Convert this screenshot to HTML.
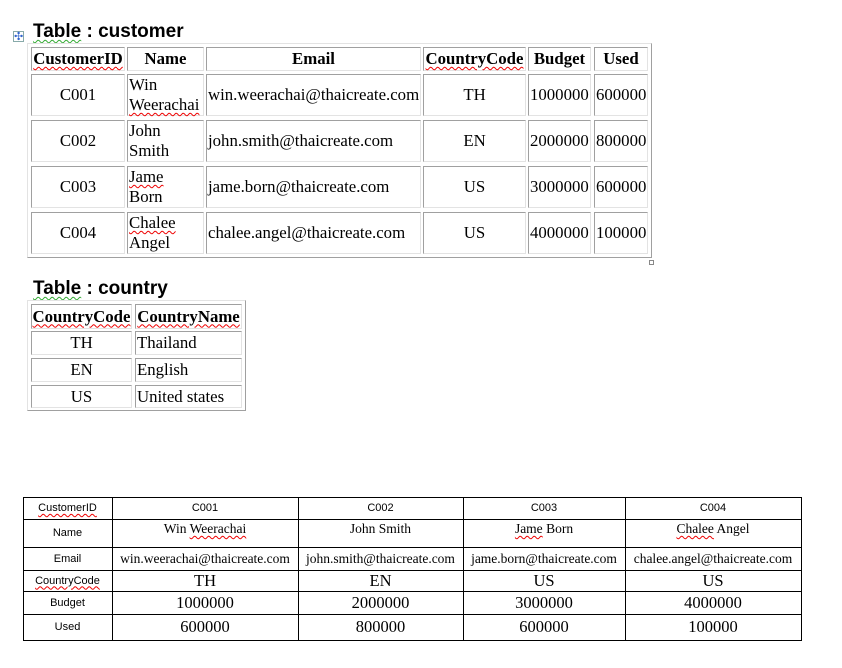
<!DOCTYPE html>
<html><head><meta charset="utf-8"><style>
body{margin:0;width:842px;height:668px;background:#fff;position:relative;overflow:hidden;font-family:"Liberation Serif",serif;color:#000}
.c{position:absolute;box-sizing:border-box;border:1px solid;border-color:#a0a0a0 #e3e3e3 #e3e3e3 #a0a0a0;font-size:16.8px;display:flex;align-items:center;justify-content:center;text-align:center;line-height:20px;white-space:nowrap}
.l{justify-content:flex-start;text-align:left;padding-left:1px}
.h{font-weight:bold}
.o{position:absolute;box-sizing:border-box;border:1px solid;border-color:#e3e3e3 #a0a0a0 #a0a0a0 #e3e3e3}
.t{position:absolute;font-family:"Liberation Sans",sans-serif;font-weight:bold;font-size:19px}
.sq{text-decoration:underline wavy #e00;text-decoration-thickness:1px;text-underline-offset:2px}
.sg{text-decoration:underline wavy #3a3;text-decoration-thickness:1px;text-underline-offset:2px}
.b{position:absolute;box-sizing:border-box;border-right:1px solid #000;border-bottom:1px solid #000;display:flex;align-items:center;justify-content:center;font-size:13px;white-space:nowrap}
.s{font-family:"Liberation Sans",sans-serif;font-size:11px}
.m{font-size:13.5px}
.g{font-size:16.5px}
</style></head><body>
<div style="position:absolute;left:13px;top:31px;width:11px;height:11px;border:1px solid #8aa;box-sizing:border-box;color:#36c;font-size:11px;line-height:9px;text-align:center;font-family:'DejaVu Sans'">✣</div>
<div class="t" style="left:33px;top:21px"><span class="sg">Table</span> : customer</div>
<div class="o" style="left:27px;top:43px;width:625px;height:215px"></div>
<div class="c h" style="left:31px;top:47px;width:94px;height:24px"><span class="sq">CustomerID</span></div>
<div class="c h" style="left:127px;top:47px;width:77px;height:24px">Name</div>
<div class="c h" style="left:206px;top:47px;width:215px;height:24px">Email</div>
<div class="c h" style="left:423px;top:47px;width:103px;height:24px"><span class="sq">CountryCode</span></div>
<div class="c h" style="left:528px;top:47px;width:63px;height:24px">Budget</div>
<div class="c h" style="left:594px;top:47px;width:54px;height:24px">Used</div>

<div class="c" style="left:31px;top:74px;width:94px;height:42px">C001</div>
<div class="c l" style="left:127px;top:74px;width:77px;height:42px"><span>Win<br><span class="sq">Weerachai</span></span></div>
<div class="c l" style="left:206px;top:74px;width:215px;height:42px">win.weerachai@thaicreate.com</div>
<div class="c" style="left:423px;top:74px;width:103px;height:42px">TH</div>
<div class="c l" style="left:528px;top:74px;width:63px;height:42px">1000000</div>
<div class="c l" style="left:594px;top:74px;width:54px;height:42px">600000</div>

<div class="c" style="left:31px;top:120px;width:94px;height:42px">C002</div>
<div class="c l" style="left:127px;top:120px;width:77px;height:42px"><span>John<br>Smith</span></div>
<div class="c l" style="left:206px;top:120px;width:215px;height:42px">john.smith@thaicreate.com</div>
<div class="c" style="left:423px;top:120px;width:103px;height:42px">EN</div>
<div class="c l" style="left:528px;top:120px;width:63px;height:42px">2000000</div>
<div class="c l" style="left:594px;top:120px;width:54px;height:42px">800000</div>

<div class="c" style="left:31px;top:166px;width:94px;height:42px">C003</div>
<div class="c l" style="left:127px;top:166px;width:77px;height:42px"><span><span class="sq">Jame</span><br>Born</span></div>
<div class="c l" style="left:206px;top:166px;width:215px;height:42px">jame.born@thaicreate.com</div>
<div class="c" style="left:423px;top:166px;width:103px;height:42px">US</div>
<div class="c l" style="left:528px;top:166px;width:63px;height:42px">3000000</div>
<div class="c l" style="left:594px;top:166px;width:54px;height:42px">600000</div>

<div class="c" style="left:31px;top:212px;width:94px;height:42px">C004</div>
<div class="c l" style="left:127px;top:212px;width:77px;height:42px"><span><span class="sq">Chalee</span><br>Angel</span></div>
<div class="c l" style="left:206px;top:212px;width:215px;height:42px">chalee.angel@thaicreate.com</div>
<div class="c" style="left:423px;top:212px;width:103px;height:42px">US</div>
<div class="c l" style="left:528px;top:212px;width:63px;height:42px">4000000</div>
<div class="c l" style="left:594px;top:212px;width:54px;height:42px">100000</div>
<div style="position:absolute;left:649px;top:260px;width:5px;height:5px;border:1px solid #888;box-sizing:border-box"></div>

<div class="t" style="left:33px;top:278px"><span class="sg">Table</span> : country</div>
<div class="o" style="left:27px;top:300px;width:219px;height:111px"></div>
<div class="c h" style="left:31px;top:304px;width:101px;height:25px"><span class="sq">CountryCode</span></div>
<div class="c h" style="left:135px;top:304px;width:107px;height:25px"><span class="sq">CountryName</span></div>
<div class="c" style="left:31px;top:331px;width:101px;height:24px">TH</div>
<div class="c l" style="left:135px;top:331px;width:107px;height:24px">Thailand</div>
<div class="c" style="left:31px;top:358px;width:101px;height:24px">EN</div>
<div class="c l" style="left:135px;top:358px;width:107px;height:24px">English</div>
<div class="c" style="left:31px;top:385px;width:101px;height:23px">US</div>
<div class="c l" style="left:135px;top:385px;width:107px;height:23px">United states</div>

<div style="position:absolute;left:23px;top:497px;width:778px;height:143px;border-left:1px solid #000;border-top:1px solid #000;box-sizing:border-box"></div>
<div class="b s" style="left:23px;top:497px;width:90px;height:23px"><span class="sq">CustomerID</span></div>
<div class="b s" style="left:112px;top:497px;width:187px;height:23px">C001</div>
<div class="b s" style="left:298px;top:497px;width:166px;height:23px">C002</div>
<div class="b s" style="left:463px;top:497px;width:163px;height:23px">C003</div>
<div class="b s" style="left:625px;top:497px;width:177px;height:23px">C004</div>
<div class="b s" style="left:23px;top:519px;width:90px;height:29px">Name</div>
<div class="b m" style="left:112px;top:519px;width:187px;height:29px;align-items:flex-start;padding-top:2px"><span>Win <span class="sq">Weerachai</span></span></div>
<div class="b m" style="left:298px;top:519px;width:166px;height:29px;align-items:flex-start;padding-top:2px">John Smith</div>
<div class="b m" style="left:463px;top:519px;width:163px;height:29px;align-items:flex-start;padding-top:2px"><span><span class="sq">Jame</span> Born</span></div>
<div class="b m" style="left:625px;top:519px;width:177px;height:29px;align-items:flex-start;padding-top:2px"><span><span class="sq">Chalee</span> Angel</span></div>
<div class="b s" style="left:23px;top:547px;width:90px;height:24px">Email</div>
<div class="b m" style="left:112px;top:547px;width:187px;height:24px">win.weerachai@thaicreate.com</div>
<div class="b m" style="left:298px;top:547px;width:166px;height:24px">john.smith@thaicreate.com</div>
<div class="b m" style="left:463px;top:547px;width:163px;height:24px">jame.born@thaicreate.com</div>
<div class="b m" style="left:625px;top:547px;width:177px;height:24px">chalee.angel@thaicreate.com</div>
<div class="b s" style="left:23px;top:570px;width:90px;height:22px"><span class="sq">CountryCode</span></div>
<div class="b g" style="left:112px;top:570px;width:187px;height:22px">TH</div>
<div class="b g" style="left:298px;top:570px;width:166px;height:22px">EN</div>
<div class="b g" style="left:463px;top:570px;width:163px;height:22px">US</div>
<div class="b g" style="left:625px;top:570px;width:177px;height:22px">US</div>
<div class="b s" style="left:23px;top:591px;width:90px;height:24px">Budget</div>
<div class="b g" style="left:112px;top:591px;width:187px;height:24px">1000000</div>
<div class="b g" style="left:298px;top:591px;width:166px;height:24px">2000000</div>
<div class="b g" style="left:463px;top:591px;width:163px;height:24px">3000000</div>
<div class="b g" style="left:625px;top:591px;width:177px;height:24px">4000000</div>
<div class="b s" style="left:23px;top:614px;width:90px;height:27px">Used</div>
<div class="b g" style="left:112px;top:614px;width:187px;height:27px">600000</div>
<div class="b g" style="left:298px;top:614px;width:166px;height:27px">800000</div>
<div class="b g" style="left:463px;top:614px;width:163px;height:27px">600000</div>
<div class="b g" style="left:625px;top:614px;width:177px;height:27px">100000</div>
</body></html>
